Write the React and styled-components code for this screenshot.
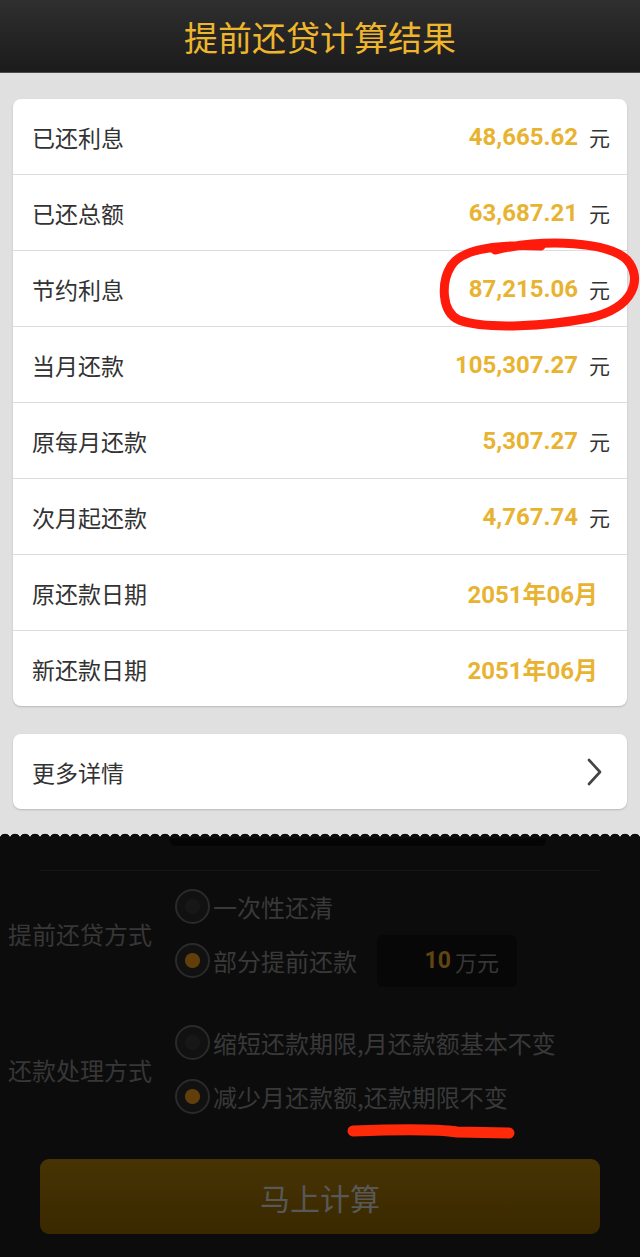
import React from 'react';
import styled, { createGlobalStyle } from 'styled-components';

const GlobalStyle = createGlobalStyle`
  html, body {
    margin: 0;
    padding: 0;
    background: #0c0c0c;
  }
  body {
    font-family: "Noto Sans CJK SC", "Noto Sans", sans-serif;
  }
`;

const Page = styled.div`
  width: 640px;
  height: 1257px;
  overflow: hidden;
  display: flex;
  flex-direction: column;
`;

const Header = styled.div`
  height: 72px;
  flex-shrink: 0;
  background: linear-gradient(#2f2f2f, #1b1b1b);
  border-bottom: 1px solid #4a4a4a;
  display: flex;
  align-items: center;
  justify-content: center;
`;

const Title = styled.h1`
  margin: 0;
  color: #efb52c;
  font-size: 34px;
  font-weight: 400;
`;

const GreyArea = styled.div`
  background: #e0e0e0;
  padding: 26px 13px 19px;
  display: flex;
  flex-direction: column;
  gap: 28px;
`;

const Card = styled.div`
  position: relative;
  background: #fff;
  border-radius: 8px;
  box-shadow: 0 1px 2px rgba(0, 0, 0, 0.18);
`;

const Row = styled.div`
  height: 75px;
  display: flex;
  align-items: center;
  padding: 0 ${(p) => (p.$date ? 29 : 17)}px 0 19px;
  border-top: ${(p) => (p.$first ? 'none' : '1px solid #dcdcdc')};
`;

const Label = styled.span`
  flex: 1;
  color: #333;
  font-size: 23px;
`;

const Value = styled.span`
  color: #e8b331;
  font-family: Roboto, "Noto Sans CJK SC", sans-serif;
  font-weight: 700;
  font-size: 24px;
`;

const Unit = styled.span`
  color: #333;
  font-size: 21px;
  margin-left: 11px;
`;

const Chevron = styled.svg`
  width: 20px;
  height: 30px;
  margin-right: 6px;
`;

const Annotation = styled.svg`
  position: absolute;
  pointer-events: none;
  overflow: visible;
`;

const Wave = styled.div`
  height: 10px;
  flex-shrink: 0;
  background-color: #e0e0e0;
  background-image: radial-gradient(circle at 5px 11px, #0c0c0c 5px, transparent 5.6px);
  background-size: 10px 10px;
  background-repeat: repeat-x;
`;

const DarkArea = styled.div`
  position: relative;
  flex: 1;
  background: #0c0c0c;
  display: flex;
  flex-direction: column;
`;

const ShadowBar = styled.div`
  height: 8px;
  margin: 0 94px 0 170px;
  background: #050505;
  border-radius: 0 0 6px 6px;
`;

const Divider = styled.div`
  height: 1px;
  margin: 24px 40px 0;
  background: #161616;
`;

const FormGroup = styled.div`
  display: flex;
  align-items: center;
  margin-top: ${(p) => p.$top}px;
`;

const FormLabel = styled.div`
  width: 167px;
  padding-left: 8px;
  color: #373737;
  font-size: 24px;
  flex-shrink: 0;
`;

const Options = styled.div`
  display: flex;
  flex-direction: column;
  gap: 19px;
`;

const Option = styled.div`
  display: flex;
  align-items: center;
  height: 35px;
  color: #393939;
  font-size: 24px;
`;

const Radio = styled.span`
  width: 31px;
  height: 31px;
  border-radius: 50%;
  border: 2px solid #2a2a2a;
  background: radial-gradient(circle, ${(p) => (p.$on ? '#613e0a' : '#171717')} 0 7px, #111 8px);
  margin-right: 3px;
  flex-shrink: 0;
`;

const AmountBox = styled.div`
  margin-left: 20px;
  width: 140px;
  height: 52px;
  background: #070707;
  border-radius: 6px;
  display: flex;
  align-items: center;
  justify-content: flex-end;
  padding-right: 18px;
  box-sizing: border-box;
`;

const AmountNum = styled.span`
  color: #614510;
  font-family: Roboto, sans-serif;
  font-weight: 700;
  font-size: 23px;
  margin-right: 4px;
`;

const AmountUnit = styled.span`
  color: #373737;
  font-size: 22px;
`;

const CalcButton = styled.div`
  margin: 45px 40px 0;
  height: 75px;
  border-radius: 9px;
  background: linear-gradient(#473404, #3a2800);
  display: flex;
  align-items: center;
  justify-content: center;
  color: #585858;
  font-size: 30px;
`;

const rows = [
  ['已还利息', '48,665.62'],
  ['已还总额', '63,687.21'],
  ['节约利息', '87,215.06'],
  ['当月还款', '105,307.27'],
  ['原每月还款', '5,307.27'],
  ['次月起还款', '4,767.74'],
  ['原还款日期', '2051年06月', true],
  ['新还款日期', '2051年06月', true],
];

const App = () => (
  <Page>
    <GlobalStyle />
    <Header>
      <Title>提前还贷计算结果</Title>
    </Header>
    <GreyArea>
      <Card>
        {rows.map(([label, value, date], i) => (
          <Row key={label} $first={i === 0} $date={date}>
            <Label>{label}</Label>
            <Value>{value}</Value>
            {!date && <Unit>元</Unit>}
          </Row>
        ))}
        {/* hand-drawn red loop round the saved interest */}
        <Annotation
          style={{ left: 424, top: 139, width: 200, height: 92 }}
          viewBox="0 0 200 92"
        >
          <path
            d="M 58 12 C 110 0, 172 4, 190 22 C 206 40, 198 70, 152 80 C 110 88, 50 92, 22 82 C 4 74, 4 44, 14 28 C 24 12, 56 6, 104 8"
            fill="none"
            stroke="#ff1b0c"
            strokeWidth="9"
            strokeLinecap="round"
            strokeLinejoin="round"
          />
        </Annotation>
      </Card>
      <Card>
        <Row $first>
          <Label>更多详情</Label>
          <Chevron viewBox="0 0 20 30">
            <path d="M5 3 L16 15 L5 27" fill="none" stroke="#444" strokeWidth="2.6" strokeLinecap="round" strokeLinejoin="round" />
          </Chevron>
        </Row>
      </Card>
    </GreyArea>
    <Wave />
    <DarkArea>
      <ShadowBar />
      <Divider />
      <FormGroup $top={18}>
        <FormLabel>提前还贷方式</FormLabel>
        <Options>
          <Option>
            <Radio />
            一次性还清
          </Option>
          <Option>
            <Radio $on />
            部分提前还款
            <AmountBox>
              <AmountNum>10</AmountNum>
              <AmountUnit>万元</AmountUnit>
            </AmountBox>
          </Option>
        </Options>
      </FormGroup>
      <FormGroup $top={47}>
        <FormLabel>还款处理方式</FormLabel>
        <Options>
          <Option>
            <Radio />
            缩短还款期限,月还款额基本不变
          </Option>
          <Option>
            <Radio $on />
            减少月还款额,还款期限不变
          </Option>
        </Options>
      </FormGroup>
      <CalcButton>马上计算</CalcButton>
      <Annotation style={{ left: 347, top: 286, width: 166, height: 16 }} viewBox="0 0 166 16">
        <path d="M 6 7 C 60 5, 90 5, 110 8 L 162 9" fill="none" stroke="#ff2a0a" strokeWidth="11" strokeLinecap="round" />
      </Annotation>
    </DarkArea>
  </Page>
);

export default App;
